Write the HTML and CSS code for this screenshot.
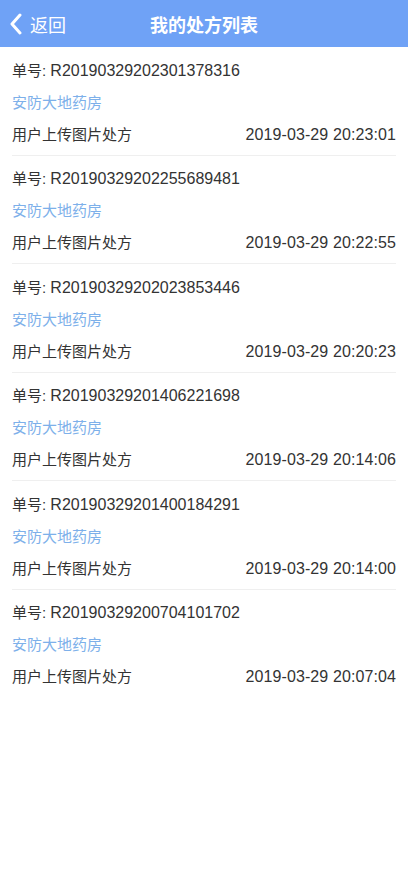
FILE: index.html
```html
<!DOCTYPE html>
<html lang="zh-CN">
<head>
<meta charset="utf-8">
<title>我的处方列表</title>
<link rel="stylesheet" href="styles.css">
</head>
<body>
<header class="nav">
  <div class="back">
    <svg class="chev" width="14" height="22" viewBox="0 0 14 22"><path d="M11 2 L3 11 L11 20" fill="none" stroke="#fff" stroke-width="3" stroke-linecap="round" stroke-linejoin="round"/></svg>
    <span class="back-text">返回</span>
  </div>
  <div class="title">我的处方列表</div>
  <div class="spacer"></div>
</header>
<main class="list">
  <div class="item">
    <div class="line">单号: <span class="num">R20190329202301378316</span></div>
    <div class="line shop">安防大地药房</div>
    <div class="line row"><span>用户上传图片处方</span><span class="date">2019-03-29 20:23:01</span></div>
  </div>
  <div class="item">
    <div class="line">单号: <span class="num">R20190329202255689481</span></div>
    <div class="line shop">安防大地药房</div>
    <div class="line row"><span>用户上传图片处方</span><span class="date">2019-03-29 20:22:55</span></div>
  </div>
  <div class="item">
    <div class="line">单号: <span class="num">R20190329202023853446</span></div>
    <div class="line shop">安防大地药房</div>
    <div class="line row"><span>用户上传图片处方</span><span class="date">2019-03-29 20:20:23</span></div>
  </div>
  <div class="item">
    <div class="line">单号: <span class="num">R20190329201406221698</span></div>
    <div class="line shop">安防大地药房</div>
    <div class="line row"><span>用户上传图片处方</span><span class="date">2019-03-29 20:14:06</span></div>
  </div>
  <div class="item">
    <div class="line">单号: <span class="num">R20190329201400184291</span></div>
    <div class="line shop">安防大地药房</div>
    <div class="line row"><span>用户上传图片处方</span><span class="date">2019-03-29 20:14:00</span></div>
  </div>
  <div class="item last">
    <div class="line">单号: <span class="num">R20190329200704101702</span></div>
    <div class="line shop">安防大地药房</div>
    <div class="line row"><span>用户上传图片处方</span><span class="date">2019-03-29 20:07:04</span></div>
  </div>
</main>
</body>
</html>
```
FILE: styles.css
```css
*{box-sizing:border-box;}
body{margin:0;background:#fff;font-family:"Liberation Sans","Noto Sans CJK SC",sans-serif;color:#333;}
.nav{height:47px;background:#6fa2f6;display:flex;align-items:center;color:#fff;}
.back{width:100px;display:flex;align-items:center;padding-left:9px;gap:7px;}
.chev{display:block;}
.back-text{font-size:18px;color:#fff;}
.title{flex:1;text-align:center;font-size:18px;font-weight:bold;}
.spacer{width:100px;}
.list{display:flex;flex-direction:column;}
.item{margin:0 12px;padding:7.5px 0 4.5px;border-bottom:1px solid #efefef;height:108.6px;}
.item.last{border-bottom:none;}
.line{height:32px;line-height:32px;font-size:15px;color:#333;white-space:nowrap;}
.shop{color:#7db0ea;}
.row{display:flex;justify-content:space-between;}
.num{font-size:16px;}
.date{font-size:16px;letter-spacing:0.1px;}
```
